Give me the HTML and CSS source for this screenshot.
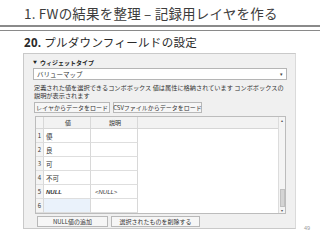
FILE: index.html
```html
<!DOCTYPE html>
<html lang="ja">
<head>
<meta charset="utf-8">
<link rel="stylesheet" href="styles.css">
</head>
<body>
<div class="slide">
  <h1 class="title">1. FWの結果を整理 – 記録用レイヤを作る</h1>
  <div class="rule"></div>
  <h2 class="subtitle"><b>20.</b> プルダウンフィールドの設定</h2>
  <div class="dialog">
    <div class="group-head"><span class="tri">▼</span>ウィジェットタイプ</div>
    <div class="combo"><span>バリューマップ</span><span class="arrow">▾</span></div>
    <p class="desc">定義された値を選択できるコンボボックス 値は属性に格納されています コンボボックスの<br>説明が表示されます</p>
    <div class="btns">
      <span class="btn w1">レイヤからデータをロード</span>
      <span class="btn w2">CSVファイルからデータをロード</span>
    </div>
    <div class="table">
      <div class="grid">
        <div class="row head"><span class="num"></span><span class="c1">値</span><span class="c2">説明</span></div>
        <div class="row"><span class="num">1</span><span class="c1">優</span><span class="c2"></span></div>
        <div class="row"><span class="num">2</span><span class="c1">良</span><span class="c2"></span></div>
        <div class="row"><span class="num">3</span><span class="c1">可</span><span class="c2"></span></div>
        <div class="row"><span class="num">4</span><span class="c1">不可</span><span class="c2"></span></div>
        <div class="row"><span class="num">5</span><span class="c1 null">NULL</span><span class="c2 inull">&lt;NULL&gt;</span></div>
        <div class="row"><span class="num">6</span><span class="c1 sel"></span><span class="c2"></span></div>
      </div>
      <div class="scroll">
        <span class="sarrow">▴</span>
        <span class="track"></span>
        <span class="thumb"></span>
        <span class="sarrow">▾</span>
      </div>
    </div>
    <div class="btns bottom">
      <span class="btn w3">NULL値の追加</span>
      <span class="btn w2">選択されたものを削除する</span>
    </div>
  </div>
  <div class="pageno">49</div>
</div>
</body>
</html>
```
FILE: styles.css
```css
* { box-sizing: border-box; }
html, body { margin: 0; padding: 0; background: #fff; }
body { width: 320px; height: 240px; overflow: hidden; font-family: "Noto Sans CJK JP", sans-serif; }
.slide { position: relative; width: 320px; height: 240px; }
.title {
  margin: 0; padding: 4px 0 0 24px; height: 25px;
  font-size: 13.5px; font-weight: normal; color: #3c3c3c; line-height: 18px;
  letter-spacing: 0.2px;
}
.rule {
  height: 6px; border-top: 2px solid #8a8a8a; border-bottom: 1px solid #8a8a8a;
}
.subtitle {
  margin: 0; padding: 3px 0 0 24px; height: 22px;
  font-size: 11.5px; font-weight: normal; color: #2a2a2a; line-height: 16px;
  letter-spacing: 0.3px;
}
.subtitle b { font-family: "Open Sans", sans-serif; font-weight: 700; }
.dialog {
  margin-left: 23px; width: 273px; height: 176px;
  background: #f0f0f0; border: 1px solid #c9c9c9; border-right-color: #dadada;
  padding: 2px 8px 0 9px;
  font-size: 6px; color: #333; line-height: 8px;
}
.group-head { height: 12px; line-height: 12px; font-size: 6px; font-weight: bold; color: #222; }
.tri { font-size: 4px; margin-right: 3px; vertical-align: 1px; }
.combo {
  display: flex; justify-content: space-between; align-items: center;
  height: 12px; background: #fff; border: 1px solid #b5b5b5; padding: 0 3px;
  font-size: 6.5px; margin-bottom: 4px;
}
.arrow { font-size: 5px; color: #444; }
.desc { margin: 0 0 2px 1px; font-size: 6.2px; line-height: 8px; color: #333; white-space: nowrap; }
.btns { display: flex; gap: 3px; height: 12px; margin-left: 1px; }
.btn {
  display: flex; align-items: center; justify-content: center;
  height: 11px; background: #f6f6f6; border: 1px solid #b8b8b8;
  font-size: 6px; color: #333; white-space: nowrap;
}
.w1 { width: 76px; }
.w2 { width: 89px; }
.w3 { width: 71px; margin-left: 3px; }
.table {
  display: flex; margin: 2px 0 0 2px; width: 251px; height: 98px;
  background: #fff; border: 1px solid #bcbcbc;
}
.grid { flex: 1; }
.row { display: flex; height: 14px; }
.row.head { height: 12px; background: #f2f2f2; border-bottom: 1px solid #d6d6d6; }
.row span { display: flex; align-items: center; border-right: 1px solid #d8d8d8; border-bottom: 1px solid #dedede; font-size: 6.5px; }
.row.head span { border-bottom: none; justify-content: center; font-size: 6px; }
.num { width: 8px; justify-content: center; background: #f4f4f4; font-size: 6px !important; }
.c1 { width: 47px; padding-left: 2px; }
.c2 { width: 47px; padding-left: 2px; }
.null { font-family: "Liberation Sans", sans-serif; font-style: italic; font-weight: bold; font-size: 6px !important; }
.inull { font-family: "Liberation Sans", sans-serif; font-style: italic; font-size: 6px !important; padding-left: 4px; }
.sel { background: #eaf2fb; }
.scroll {
  width: 7px; display: flex; flex-direction: column; align-items: center;
  background: #f4f4f4; border-left: 1px solid #dcdcdc;
}
.sarrow { font-size: 4px; height: 6px; line-height: 6px; color: #555; }
.track { flex: 1; }
.thumb { width: 5px; height: 18px; background: #d4d4d4; border: 1px solid #c0c0c0; }
.bottom { margin-top: 2px; }
.pageno {
  position: absolute; right: 10px; bottom: 9px;
  font-family: "Liberation Sans", sans-serif; font-size: 5.5px; color: #9a9a9a;
}
```
